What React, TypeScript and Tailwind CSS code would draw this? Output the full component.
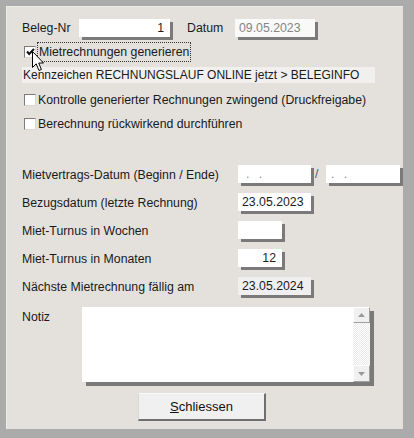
import { ReactNode } from 'react';

const font = "font-['Liberation_Sans',Arial,sans-serif]";

function Box({ checked }: { checked?: boolean }) {
  return (
    <span className="w-[12px] h-[12px] bg-white border border-t-[#7c7c7c] border-l-[#7c7c7c] border-b-[#d8d8d8] border-r-[#d8d8d8] flex items-center justify-center shrink-0">
      {checked && (
        <svg width="9" height="8" viewBox="0 0 9 8">
          <path d="M1 3.5 L3.2 6 L8 1" stroke="#111" strokeWidth="2" fill="none" />
        </svg>
      )}
    </span>
  );
}

function Field({ w, value, right, bg = 'bg-white', color = 'text-[#1c1c1c]' }: any) {
  return (
    <div
      className={`h-[18px] ${bg} ${color} shadow-[3px_3px_0_#7a7a7a] flex items-center text-[12.3px] leading-none shrink-0 ${right ? 'justify-end pr-[6px]' : 'pl-[4px]'}`}
      style={{ width: w }}
    >
      {value}
    </div>
  );
}

function FormRow({ label, children, mt }: { label: string; children: ReactNode; mt: string }) {
  return (
    <div className={`flex items-center h-[18px] ${mt}`}>
      <span className="w-[216px] shrink-0 mt-[2px]">{label}</span>
      {children}
    </div>
  );
}

function Cursor() {
  return (
    <svg className="absolute left-[25px] top-[44px]" width="13" height="21" viewBox="0 0 13 21">
      <path d="M0.5 0.5 L0.5 16.5 L4.2 12.8 L7 19.5 L9.4 18.5 L6.7 12 L11.5 12 Z" fill="#fff" stroke="#000" strokeWidth="1" />
    </svg>
  );
}

export default function App() {
  return (
    <div className={`w-[414px] h-[438px] bg-[#ababab] pt-[6px] pl-[6px] pr-[11px] pb-[9px] ${font}`}>
      <div className="relative h-full bg-[#e4e1dd] border-t border-l border-[#eeece8] pl-[15px] text-[12.3px] text-[#1a1a1a] flex flex-col">
        {/* Kopfzeile */}
        <div className="flex items-center h-[18px] mt-[12px]">
          <span className="w-[57px] shrink-0">Beleg-Nr</span>
          <Field w={91} value="1" right />
          <span className="ml-[17px] w-[48px] shrink-0">Datum</span>
          <Field w={80} value="09.05.2023" bg="bg-[#f9f9f9]" color="text-[#858585]" />
        </div>

        <div className="flex items-center h-[20px] mt-[5px] ml-[2px]">
          <Box checked />
          <span className="ml-[1px] h-[20px] px-[1px] flex items-center border border-dotted border-[#333]">
            Mietrechnungen generieren
          </span>
        </div>

        <div className="h-[16px] mt-[5px] w-[353px] bg-[#f1f0ee] flex items-center pl-[1px] text-[12px]">
          Kennzeichen RECHNUNGSLAUF ONLINE jetzt &gt; BELEGINFO
        </div>

        <div className="flex items-center h-[16px] mt-[9px] ml-[2px] gap-[2px]">
          <Box />
          <span>Kontrolle generierter Rechnungen zwingend (Druckfreigabe)</span>
        </div>
        <div className="flex items-center h-[16px] mt-[8px] ml-[2px] gap-[2px]">
          <Box />
          <span>Berechnung rückwirkend durchführen</span>
        </div>

        {/* Mietdaten */}
        <FormRow label="Mietvertrags-Datum (Beginn / Ende)" mt="mt-[33px]">
          <Field w={73} value={<span className="text-[#888] pl-[4px] tracking-[3px]">. .</span>} />
          <span className="ml-[4px] w-[11px] shrink-0 text-[#555]">/</span>
          <Field w={74} value={<span className="text-[#888] pl-[1px] tracking-[3px]">. .</span>} />
        </FormRow>
        <FormRow label="Bezugsdatum (letzte Rechnung)" mt="mt-[10px]">
          <Field w={73} value="23.05.2023" />
        </FormRow>
        <FormRow label="Miet-Turnus in Wochen" mt="mt-[10px]">
          <Field w={44} value="" />
        </FormRow>
        <FormRow label="Miet-Turnus in Monaten" mt="mt-[10px]">
          <Field w={44} value="12" right />
        </FormRow>
        <FormRow label="Nächste Mietrechnung fällig am" mt="mt-[10px]">
          <Field w={73} value="23.05.2024" bg="bg-[#efefef]" />
        </FormRow>

        {/* Notiz */}
        <div className="flex mt-[12px]">
          <span className="w-[60px] shrink-0 pt-[1px]">Notiz</span>
          <div className="w-[288px] h-[75px] bg-white shadow-[4px_4px_0_#7a7a7a] flex justify-end">
            <div className="w-[17px] h-full flex flex-col bg-[repeating-conic-gradient(#e8e8e8_0%_25%,#ffffff_0%_50%)] bg-[length:2px_2px]">
              <div className="h-[16px] bg-[#f0f0f0] border border-t-white border-l-white border-b-[#a0a0a0] border-r-[#a0a0a0] flex items-center justify-center">
                <svg width="7" height="4" viewBox="0 0 7 4"><path d="M0 4 L3.5 0 L7 4 Z" fill="#9a9a9a" /></svg>
              </div>
              <div className="flex-1" />
              <div className="h-[17px] bg-[#f0f0f0] border border-t-white border-l-white border-b-[#a0a0a0] border-r-[#a0a0a0] flex items-center justify-center">
                <svg width="7" height="4" viewBox="0 0 7 4"><path d="M0 0 L3.5 4 L7 0 Z" fill="#9a9a9a" /></svg>
              </div>
            </div>
          </div>
        </div>

        <div className="flex mt-[11px] ml-[116px]">
          <button className="w-[128px] h-[28px] bg-[#f0f0f0] border border-t-[#fafafa] border-l-[#d8d8d8] border-b-2 border-r-2 border-b-[#6f6f6f] border-r-[#6f6f6f] text-[13px] text-[#111] flex items-center justify-center">
            <span><span className="underline">S</span>chliessen</span>
          </button>
        </div>

        <Cursor />
      </div>
    </div>
  );
}
